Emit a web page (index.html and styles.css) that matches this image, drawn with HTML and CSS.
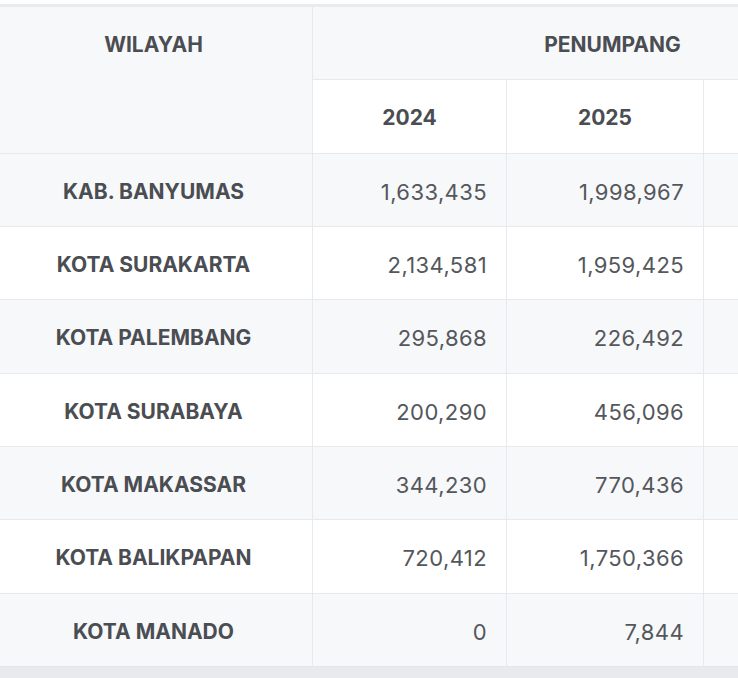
FILE: index.html
```html
<!DOCTYPE html>
<html lang="id">
<head>
<meta charset="utf-8">
<title>Penumpang per Wilayah</title>
<link rel="stylesheet" href="styles.css">
</head>
<body>
<div class="page">
  <div class="scroller">
    <table class="data">
      <colgroup>
        <col class="c-region">
        <col class="c-y1">
        <col class="c-y2">
        <col class="c-y3">
      </colgroup>
      <thead>
        <tr>
          <th class="region-head" rowspan="2">WILAYAH</th>
          <th class="group-head" colspan="3">PENUMPANG</th>
        </tr>
        <tr class="years">
          <th>2024</th>
          <th>2025</th>
          <th></th>
        </tr>
      </thead>
      <tbody>
        <tr><td class="region">KAB. BANYUMAS</td><td class="num">1,633,435</td><td class="num">1,998,967</td><td class="num"></td></tr>
        <tr><td class="region">KOTA SURAKARTA</td><td class="num">2,134,581</td><td class="num">1,959,425</td><td class="num"></td></tr>
        <tr><td class="region">KOTA PALEMBANG</td><td class="num">295,868</td><td class="num">226,492</td><td class="num"></td></tr>
        <tr><td class="region">KOTA SURABAYA</td><td class="num">200,290</td><td class="num">456,096</td><td class="num"></td></tr>
        <tr><td class="region">KOTA MAKASSAR</td><td class="num">344,230</td><td class="num">770,436</td><td class="num"></td></tr>
        <tr><td class="region">KOTA BALIKPAPAN</td><td class="num">720,412</td><td class="num">1,750,366</td><td class="num"></td></tr>
        <tr><td class="region">KOTA MANADO</td><td class="num">0</td><td class="num">7,844</td><td class="num"></td></tr>
      </tbody>
    </table>
  </div>
</div>
</body>
</html>
```
FILE: styles.css
```css
html, body {
  margin: 0;
  padding: 0;
}
body {
  background: #e9eaed;
  font-family: "Inter", "Noto Sans", "Liberation Sans", sans-serif;
  width: 738px;
  height: 678px;
  overflow: hidden;
}
.page {
  background: #ffffff;
  padding-top: 4px;
}
.scroller {
  overflow: hidden;
  border-top: 3px solid #e9ebee;
  border-bottom: 1px solid #e4e6ea;
}
.data {
  border-collapse: collapse;
  margin-left: -6px;
  table-layout: fixed;
  width: 918px;
  color: #4a4d52;
}
.c-region { width: 318px; }
.c-y1 { width: 194px; }
.c-y2 { width: 197px; }
.c-y3 { width: 209px; }
.data th,
.data td {
  border: 1px solid #e7e9ec;
  height: 68.33px;
  padding: 4px 20px 0;
  font-size: 21px;
  line-height: 26px;
}
.data tr:first-child th { border-top: none; }
.data tr:last-child td { border-bottom: none; }
.data th {
  font-weight: 700;
  text-align: center;
  background: #f7f8fa;
}
.data .region-head {
  vertical-align: top;
  padding-top: 25px;
}
.data .group-head {
  padding-right: 0;
  padding-left: 0;
}
.years th {
  background: #ffffff;
}
.data tbody tr:nth-child(odd) td { background: #f7f8fa; }
.data tbody tr:nth-child(even) td { background: #ffffff; }
.region {
  font-weight: 700;
  text-align: center;
}
.data .num {
  text-align: right;
  color: #54575c;
  font-weight: 400;
  font-size: 22px;
  letter-spacing: 0.4px;
  padding-right: 19px;
}
```
